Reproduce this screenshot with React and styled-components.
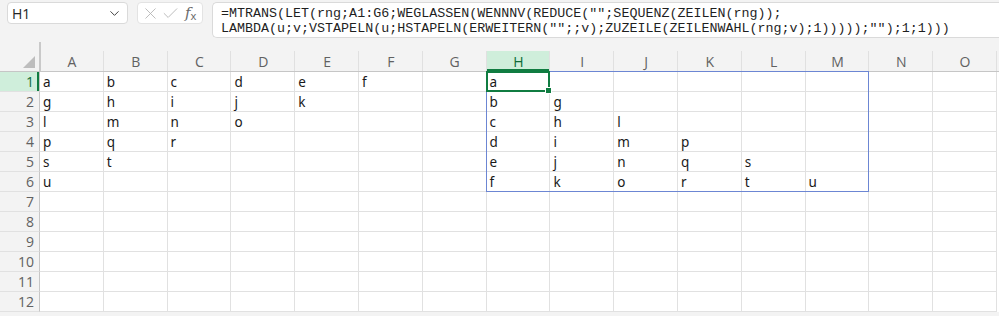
import styled, { createGlobalStyle } from "styled-components"
import { ChevronDown, X, Check } from "lucide-react"

const COLS = ['A','B','C','D','E','F','G','H','I','J','K','L','M','N','O']
const ROWS = 12
const SEL_COL = 'H'
const SEL_ROW = 1

const left = [
  ['a','b','c','d','e','f'],
  ['g','h','i','j','k'],
  ['l','m','n','o'],
  ['p','q','r'],
  ['s','t'],
  ['u']
]
// spill result in H1:M6 (transposed-ish staircase)
const spill = [
  ['a'],
  ['b','g'],
  ['c','h','l'],
  ['d','i','m','p'],
  ['e','j','n','q','s'],
  ['f','k','o','r','t','u']
]

const valueAt = (r, c) => {
  if (r < 6 && c < 6 && left[r][c]) return left[r][c]
  if (r < 6 && c >= 7 && c < 13 && spill[r][c - 7]) return spill[r][c - 7]
  return ''
}

const App = () => {
  const cells = []
  for (let r = 0; r < ROWS; r++) {
    cells.push(
      <RowHead key={'h' + r} $r={r + 1} $active={r + 1 === SEL_ROW}>{r + 1}</RowHead>
    )
    COLS.forEach((col, c) => {
      cells.push(
        <Cell key={col + r} $r={r + 1} $c={c + 2}>{valueAt(r, c)}</Cell>
      )
    })
  }

  return (
    <>
      <GlobalStyle />
      <Page>
        <Toolbar>
          <NameBox>
            <span>H1</span>
            <ChevronDown size={15} strokeWidth={1.6} color="#424242" />
          </NameBox>
          <FxGroup>
            <X size={19} strokeWidth={1.1} color="#b3b3b3" />
            <Check size={19} strokeWidth={1.1} color="#b3b3b3" />
            <Fx>f<sub>x</sub></Fx>
          </FxGroup>
          <FormulaBox>
            <div>=MTRANS(LET(rng;A1:G6;WEGLASSEN(WENNNV(REDUCE("";SEQUENZ(ZEILEN(rng));</div>
            <div>LAMBDA(u;v;VSTAPELN(u;HSTAPELN(ERWEITERN("";;v);ZUZEILE(ZEILENWAHL(rng;v);1)))));"");1;1)))</div>
          </FormulaBox>
        </Toolbar>
        <Sheet>
          <HeaderRow>
            <Corner><Triangle /></Corner>
            {COLS.map(c => <ColHead key={c} $active={c === SEL_COL}>{c}</ColHead>)}
          </HeaderRow>
          <Body>
            {cells}
            <SpillBorder />
            <Selection />
          </Body>
        </Sheet>
      </Page>
    </>
  )
}

export default App

const GlobalStyle = createGlobalStyle`
  html, body {
    margin: 0;
    padding: 0;
    background: #f3f3f3;
  }
  body {
    font-family: "Noto Sans", "Open Sans", sans-serif;
    color: #1f1f1f;
  }
`

const Page = styled.div`
  width: 999px;
  height: 316px;
  overflow: hidden;
  background: #f3f3f3;
`

const Toolbar = styled.div`
  display: flex;
  align-items: flex-start;
  padding: 2px 0 0 7px;
  height: 42px;
  box-sizing: border-box;
`

const NameBox = styled.div`
  width: 121px;
  height: 22px;
  box-sizing: border-box;
  background: #fff;
  border: 1px solid #dadada;
  border-radius: 4px;
  display: flex;
  align-items: center;
  justify-content: space-between;
  padding: 0 5px 0 4px;
  font-family: "Open Sans", "Noto Sans", sans-serif;
  font-size: 14px;
  color: #242424;
`

const FxGroup = styled.div`
  margin-left: 9px;
  width: 66px;
  height: 22px;
  box-sizing: border-box;
  background: #fff;
  border: 1px solid #e3e3e3;
  border-radius: 4px;
  display: flex;
  align-items: center;
  gap: 1px;
  padding-left: 3px;
`

const Fx = styled.span`
  margin-left: 4px;
  font-family: "DejaVu Serif", serif;
  font-style: italic;
  font-size: 15px;
  color: #6b6b6b;
  line-height: 1;
  sub {
    font-style: normal;
    font-family: "Noto Sans", sans-serif;
    font-size: 11px;
    vertical-align: -2px;
  }
`

const FormulaBox = styled.div`
  margin-left: 9px;
  flex: 1;
  height: 36px;
  box-sizing: border-box;
  background: #fff;
  border: 1px solid #dadada;
  border-right: none;
  border-radius: 5px 0 0 5px;
  padding: 3px 0 0 8px;
  font-family: "Liberation Mono", monospace;
  font-size: 13.35px;
  line-height: 15px;
  color: #1f1f1f;
  white-space: nowrap;
`

const Sheet = styled.div`
  display: flex;
  flex-direction: column;
`

const gridCols = `40px repeat(15, 63.8px) 1fr`

const HeaderRow = styled.div`
  display: grid;
  grid-template-columns: ${gridCols};
  height: 30px;
  border-bottom: 1px solid #c6c6c6;
  box-sizing: border-box;
`

const Corner = styled.div`
  position: relative;
  border-right: 2px solid #c9c9c9;
  margin-right: -1px;
  display: flex;
  align-items: flex-end;
  justify-content: flex-end;
  padding: 0 4px 3px 0;
`

const Triangle = styled.div`
  width: 0;
  height: 0;
  border-left: 12px solid transparent;
  border-bottom: 12px solid #bdbdbd;
`

const ColHead = styled.div`
  position: relative;
  display: flex;
  align-items: center;
  justify-content: center;
  padding-top: ${p => p.$active ? '1px' : '10px'};
  font-family: "Open Sans", "Noto Sans", sans-serif;
  font-size: 14px;
  color: ${p => p.$active ? '#0e6a37' : '#616161'};
  background: ${p => p.$active ? '#cfeedb' : 'transparent'};
  margin-top: ${p => p.$active ? '9px' : '0'};
  box-shadow: ${p => p.$active ? 'inset 0 -2px 0 #107c41' : 'none'};
  &::after {
    content: "";
    position: absolute;
    right: 0;
    top: ${p => p.$active ? '0' : '9px'};
    bottom: 0;
    width: 1px;
    background: #e0e0e0;
  }
`

const Body = styled.div`
  display: grid;
  grid-template-columns: ${gridCols};
  grid-auto-rows: 20px;
  background: #fff;
`

const RowHead = styled.div`
  grid-row: ${p => p.$r};
  grid-column: 1;
  background: ${p => p.$active ? '#cfeedb' : '#f3f3f3'};
  color: ${p => p.$active ? '#0e6a37' : '#616161'};
  border-right: 1px solid #c6c6c6;
  border-bottom: 1px solid #e1e1e1;
  box-shadow: ${p => p.$active ? 'inset -2px 0 0 #107c41' : 'none'};
  box-sizing: border-box;
  text-align: right;
  padding-right: 5px;
  font-family: "Open Sans", "Noto Sans", sans-serif;
  font-size: 14px;
  line-height: 19px;
`

const Cell = styled.div`
  grid-row: ${p => p.$r};
  grid-column: ${p => p.$c};
  border-right: 1px solid #e1e1e1;
  border-bottom: 1px solid #e1e1e1;
  box-sizing: border-box;
  padding-left: 3px;
  font-family: "Noto Sans", sans-serif;
  font-size: 13.5px;
  line-height: 20px;
  color: #1a1a1a;
`

const SpillBorder = styled.div`
  grid-row: 1 / 7;
  grid-column: 9 / 15;
  margin: -1px 0 0 -1px;
  border: 1px solid #6c86d3;
  pointer-events: none;
  z-index: 1;
`

const Selection = styled.div`
  grid-row: 1;
  grid-column: 9;
  position: relative;
  margin: -1px 0 0 -1px;
  border: 2px solid #107c41;
  z-index: 2;
  &::after {
    content: "";
    position: absolute;
    right: -4px;
    bottom: -4px;
    width: 5px;
    height: 5px;
    background: #107c41;
    border: 1px solid #fff;
  }
`
